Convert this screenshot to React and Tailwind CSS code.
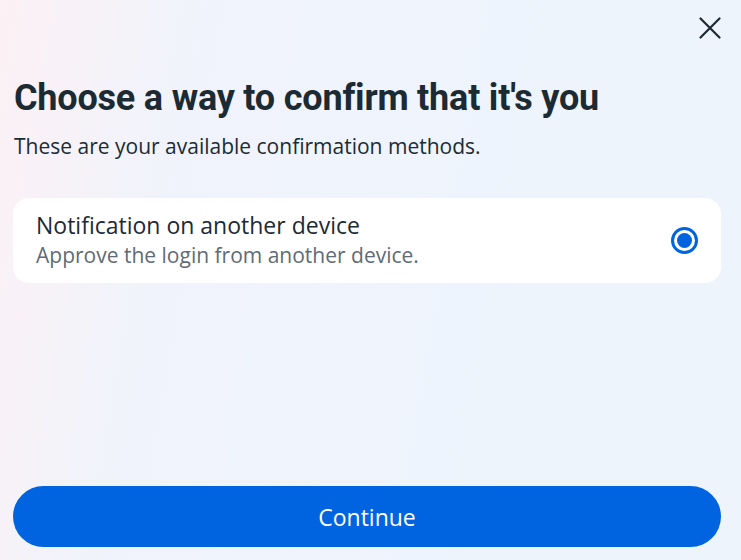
export default function App() {
  return (
    <div
      className="w-[741px] h-[560px] overflow-hidden bg-[linear-gradient(100deg,#fcf1f5_0%,#f1f3fb_22%,#eef4fd_60%,#eef4fc_100%)] pl-[13px] pr-[20px] flex flex-col"
      style={{ fontFamily: '"Open Sans", "Noto Sans", sans-serif' }}
    >
      {/* Close */}
      <div className="flex justify-end pt-[17px]">
        <button className="w-[22px] h-[22px] flex items-center justify-center text-[#1c2b33]">
          <svg viewBox="0 0 22 22" className="w-[22px] h-[22px]" fill="none" stroke="currentColor" strokeWidth={2.2} strokeLinecap="round">
            <path d="M1.5 1.5l19 19M20.5 1.5l-19 19" />
          </svg>
        </button>
      </div>

      {/* Header */}
      <h1
        className="mt-[37px] pl-[1px] text-[36px] leading-[44px] font-bold text-[#1c2b33] tracking-[-0.2px]"
        style={{ fontFamily: 'Roboto, sans-serif' }}
      >
        Choose a way to confirm that it's you
      </h1>
      <p className="mt-[12px] pl-[1px] text-[21px] leading-[28px] text-[#1c2b33]">
        These are your available confirmation methods.
      </p>

      {/* Option card */}
      <label className="mt-[38px] flex items-center justify-between bg-white rounded-[16px] pl-[23px] pr-[23px] h-[85px]">
        <div className="flex flex-col">
          <span className="text-[23px] leading-[30px] font-medium text-[#1c2b33]">Notification on another device</span>
          <span className="text-[21px] leading-[31px] text-[#606b77]">Approve the login from another device.</span>
        </div>
        <span className="w-[27px] h-[27px] rounded-full border-[3px] border-[#0064e0] flex items-center justify-center">
          <span className="w-[15px] h-[15px] rounded-full bg-[#0064e0]" />
        </span>
      </label>

      <div className="flex-1" />

      {/* Continue */}
      <button className="mb-[13px] h-[61px] w-full rounded-full bg-[#0064e0] text-white text-[23px] leading-[28px]">
        Continue
      </button>
    </div>
  )
}
